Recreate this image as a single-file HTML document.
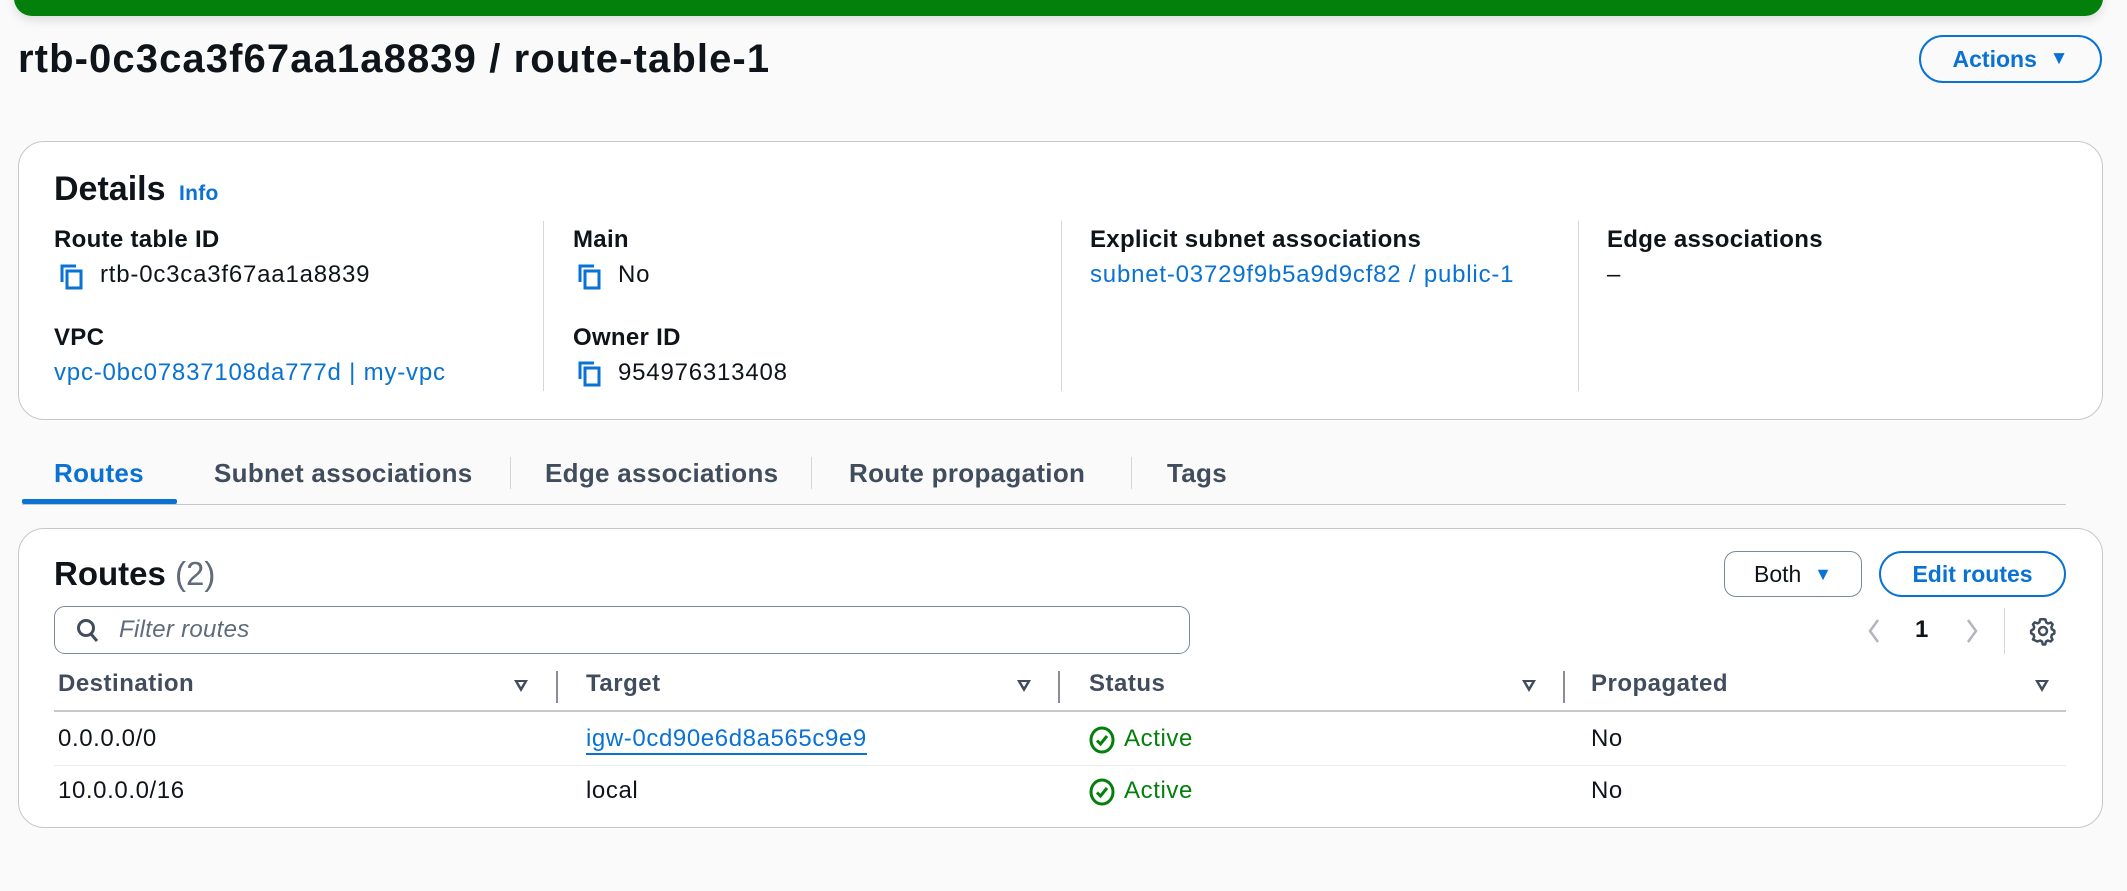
<!DOCTYPE html>
<html><head><meta charset="utf-8"><style>
*{margin:0;padding:0;box-sizing:border-box}
body{width:2127px;height:891px;background:#fafafa;font-family:"Liberation Sans",sans-serif;color:#0f141a;position:relative;overflow:hidden}
.a{position:absolute;white-space:nowrap}
.banner{left:14px;top:-20px;width:2089px;height:36px;background:#037f0c;border-radius:18px;box-shadow:0 4px 10px rgba(0,0,0,.12)}
.title{left:18px;top:37px;font-size:40px;font-weight:bold;letter-spacing:1.1px}
.btn{border:2px solid #0972d3;border-radius:24px;color:#0972d3;font-weight:bold;font-size:23px;display:flex;align-items:center;justify-content:center}
.card{background:#fff;border:1px solid #c6c6cd;border-radius:26px}
.lbl{font-size:24px;font-weight:bold;letter-spacing:0.3px}
.val{font-size:24px;letter-spacing:0.8px}
.link{color:#0972d3}
.div{width:1px;background:#d5d5db}
.tab{font-size:26px;font-weight:bold;color:#414d5c;top:458px;letter-spacing:0.3px}
.th{font-size:24px;font-weight:bold;color:#414d5c;top:670px;letter-spacing:0.5px}
.td{font-size:24px;letter-spacing:0.6px}
.sort{width:0;height:0;border-left:7px solid transparent;border-right:7px solid transparent;border-top:12px solid #414d5c;top:680px}
.sort::after{content:"";position:absolute;left:-3px;top:-10px;border-left:3px solid transparent;border-right:3px solid transparent;border-top:5px solid #fff}
</style></head><body>
<div class="a banner"></div>
<div class="a title">rtb-0c3ca3f67aa1a8839 / route-table-1</div>
<div class="a btn" style="left:1919px;top:35px;width:183px;height:48px">Actions&nbsp;&nbsp;<span style="font-size:19px">▼</span></div>

<div class="a card" style="left:18px;top:141px;width:2085px;height:279px"></div>
<div class="a" style="left:54px;top:170px;font-size:34px;font-weight:bold;letter-spacing:0px">Details <span style="font-size:21px;color:#0972d3;letter-spacing:0.3px;margin-left:4px">Info</span></div>

<div class="a div" style="left:543px;top:221px;height:170px"></div>
<div class="a div" style="left:1061px;top:221px;height:170px"></div>
<div class="a div" style="left:1578px;top:221px;height:170px"></div>

<svg class="a" style="left:60px;top:264px" width="24" height="26" viewBox="0 0 24 26"><path d="M2 18V2h14" fill="none" stroke="#0972d3" stroke-width="3"/><rect x="7" y="7" width="14" height="17" fill="none" stroke="#0972d3" stroke-width="3"/></svg>
<svg class="a" style="left:578px;top:264px" width="24" height="26" viewBox="0 0 24 26"><path d="M2 18V2h14" fill="none" stroke="#0972d3" stroke-width="3"/><rect x="7" y="7" width="14" height="17" fill="none" stroke="#0972d3" stroke-width="3"/></svg>
<svg class="a" style="left:578px;top:361px" width="24" height="26" viewBox="0 0 24 26"><path d="M2 18V2h14" fill="none" stroke="#0972d3" stroke-width="3"/><rect x="7" y="7" width="14" height="17" fill="none" stroke="#0972d3" stroke-width="3"/></svg>

<div class="a lbl" style="left:54px;top:226px">Route table ID</div>
<div class="a val" style="left:100px;top:261px">rtb-0c3ca3f67aa1a8839</div>
<div class="a lbl" style="left:54px;top:324px">VPC</div>
<div class="a val link" style="left:54px;top:359px">vpc-0bc07837108da777d | my-vpc</div>

<div class="a lbl" style="left:573px;top:226px">Main</div>
<div class="a val" style="left:618px;top:261px">No</div>
<div class="a lbl" style="left:573px;top:324px">Owner ID</div>
<div class="a val" style="left:618px;top:359px">954976313408</div>

<div class="a lbl" style="left:1090px;top:226px">Explicit subnet associations</div>
<div class="a val link" style="left:1090px;top:261px">subnet-03729f9b5a9d9cf82 / public-1</div>

<div class="a lbl" style="left:1607px;top:226px">Edge associations</div>
<div class="a val" style="left:1607px;top:261px">–</div>

<div class="a tab" style="left:54px;color:#0972d3">Routes</div>
<div class="a tab" style="left:214px">Subnet associations</div>
<div class="a tab" style="left:545px">Edge associations</div>
<div class="a tab" style="left:849px">Route propagation</div>
<div class="a tab" style="left:1167px">Tags</div>
<div class="a div" style="left:510px;top:457px;height:32px"></div>
<div class="a div" style="left:811px;top:457px;height:32px"></div>
<div class="a div" style="left:1131px;top:457px;height:32px"></div>
<div class="a" style="left:22px;top:504px;width:2044px;height:1px;background:#c6c6cd"></div>
<div class="a" style="left:22px;top:499px;width:155px;height:5px;background:#0972d3;border-radius:2px"></div>

<div class="a card" style="left:18px;top:528px;width:2085px;height:300px"></div>
<div class="a" style="left:54px;top:555px;font-size:33px;font-weight:bold;letter-spacing:0px">Routes <span style="font-weight:normal;color:#5f6b7a">(2)</span></div>
<div class="a" style="left:1724px;top:551px;width:138px;height:46px;border:1px solid #7d8998;border-radius:12px;font-size:23px;display:flex;align-items:center;justify-content:center">Both&nbsp;&nbsp;<span style="color:#0972d3;font-size:18px">▼</span></div>
<div class="a btn" style="left:1879px;top:551px;width:187px;height:46px">Edit routes</div>

<div class="a" style="left:54px;top:606px;width:1136px;height:48px;border:1px solid #7d8998;border-radius:11px;background:#fff"></div>
<svg class="a" style="left:76px;top:618px" width="24" height="26" viewBox="0 0 24 26"><circle cx="10" cy="10" r="7.5" fill="none" stroke="#414d5c" stroke-width="3"/><path d="M15 16l6 7" stroke="#414d5c" stroke-width="3"/></svg>
<div class="a" style="left:119px;top:616px;font-size:24px;font-style:italic;color:#5f6b7a;letter-spacing:0.3px">Filter routes</div>

<svg class="a" style="left:1864px;top:617px" width="20" height="28" viewBox="0 0 20 28"><path d="M14 3L6 14l8 11" fill="none" stroke="#b4b4bb" stroke-width="2.5"/></svg>
<div class="a" style="left:1915px;top:616px;font-size:24px;font-weight:bold">1</div>
<svg class="a" style="left:1962px;top:617px" width="20" height="28" viewBox="0 0 20 28"><path d="M6 3l8 11-8 11" fill="none" stroke="#b4b4bb" stroke-width="2.5"/></svg>
<div class="a div" style="left:2004px;top:608px;height:46px"></div>
<svg class="a" style="left:2028px;top:616px" width="30" height="30" viewBox="0 0 24 24"><path d="M12 2.5l2 .3.5 2.3 1.6.9 2.2-.8 1.4 1.6-1 2.1.4 1.7 2 1.2v2.1l-2 1.1-.5 1.8 1 2.1-1.5 1.5-2.2-.8-1.6.9-.5 2.3h-2l-.5-2.3-1.6-.9-2.2.8L4 18.8l1-2.1-.5-1.8-2-1.1v-2.1l2-1.2.5-1.7-1-2.1L5.4 5.1l2.2.8 1.6-.9.5-2.3z" fill="none" stroke="#414d5c" stroke-width="2" stroke-linejoin="round"/><circle cx="12" cy="12" r="3.2" fill="none" stroke="#414d5c" stroke-width="2"/></svg>

<div class="a th" style="left:58px">Destination</div>
<div class="a th" style="left:586px">Target</div>
<div class="a th" style="left:1089px">Status</div>
<div class="a th" style="left:1591px">Propagated</div>
<div class="a sort" style="left:514px"></div>
<div class="a sort" style="left:1017px"></div>
<div class="a sort" style="left:1522px"></div>
<div class="a sort" style="left:2035px"></div>
<div class="a" style="left:556px;top:671px;width:2px;height:32px;background:#8c8c94"></div>
<div class="a" style="left:1058px;top:671px;width:2px;height:32px;background:#8c8c94"></div>
<div class="a" style="left:1563px;top:671px;width:2px;height:32px;background:#8c8c94"></div>
<div class="a" style="left:54px;top:710px;width:2012px;height:2px;background:#c6c6cd"></div>
<div class="a" style="left:54px;top:765px;width:2012px;height:1px;background:#e9ebed"></div>

<div class="a td" style="left:58px;top:725px">0.0.0.0/0</div>
<div class="a td link" style="left:586px;top:725px;border-bottom:2px solid #0972d3;line-height:28px">igw-0cd90e6d8a565c9e9</div>
<div class="a td" style="left:1591px;top:725px">No</div>
<div class="a td" style="left:58px;top:777px">10.0.0.0/16</div>
<div class="a td" style="left:586px;top:777px">local</div>
<div class="a td" style="left:1591px;top:777px">No</div>

<svg class="a" style="left:1089px;top:726px" width="26" height="28" viewBox="0 0 26 28"><ellipse cx="13" cy="14" rx="11" ry="12" fill="none" stroke="#037f0c" stroke-width="3"/><path d="M8 14.5l3.5 3.5 6.5-8" fill="none" stroke="#037f0c" stroke-width="3"/></svg>
<div class="a td" style="left:1124px;top:725px;color:#037f0c">Active</div>
<svg class="a" style="left:1089px;top:778px" width="26" height="28" viewBox="0 0 26 28"><ellipse cx="13" cy="14" rx="11" ry="12" fill="none" stroke="#037f0c" stroke-width="3"/><path d="M8 14.5l3.5 3.5 6.5-8" fill="none" stroke="#037f0c" stroke-width="3"/></svg>
<div class="a td" style="left:1124px;top:777px;color:#037f0c">Active</div>
</body></html>
